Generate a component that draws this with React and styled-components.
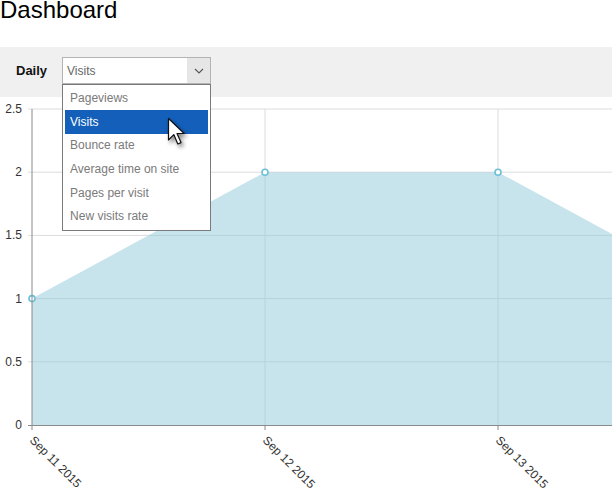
import React from "react";
import styled, { createGlobalStyle } from "styled-components";

const GlobalStyle = createGlobalStyle`
  html, body {
    margin: 0;
    padding: 0;
    background: #fff;
    overflow: hidden;
  }
  body {
    font-family: "Liberation Sans", Arial, sans-serif;
  }
`;

const Page = styled.div`
  width: 612px;
  height: 489px;
  overflow: hidden;
`;

const Header = styled.div`
  display: flow-root;
  height: 47px;
`;

const Title = styled.h1`
  margin: -4px 0 0 0;
  font-size: 24px;
  font-weight: normal;
  color: #000;
`;

const Toolbar = styled.div`
  display: flex;
  align-items: center;
  gap: 15px;
  box-sizing: border-box;
  height: 50px;
  padding: 0 0 3px 16px;
  background: #f0f0f0;
`;

const Label = styled.span`
  margin-top: -1px;
  font-size: 13px;
  font-weight: bold;
  color: #111;
`;

const SelectWrap = styled.div`
  position: relative;
  width: 149px;
`;

const SelectBox = styled.div`
  display: flex;
  align-items: stretch;
  box-sizing: border-box;
  height: 27px;
  border: 1px solid #b4b4b4;
  background: #fff;
`;

const SelectValue = styled.span`
  flex: 1;
  display: flex;
  align-items: center;
  padding-left: 4px;
  font-size: 12px;
  color: #666;
`;

const ArrowCell = styled.span`
  display: flex;
  align-items: center;
  justify-content: center;
  width: 23px;
  background: #e6e6e6;
`;

const Dropdown = styled.ul`
  position: absolute;
  top: 27px;
  left: 0;
  box-sizing: border-box;
  width: 149px;
  margin: 0;
  padding: 1.5px 2px 2px;
  list-style: none;
  background: #fff;
  border: 1px solid #7a7a7a;
  z-index: 2;
`;

const Option = styled.li`
  height: 23.6px;
  display: flex;
  align-items: center;
  padding-left: 5px;
  font-size: 12px;
  color: ${(props) => (props.active ? "#fff" : "#7a7a7a")};
  background: ${(props) => (props.active ? "#135fb9" : "transparent")};
`;

const Pointer = styled.svg`
  position: absolute;
  left: 104px;
  top: 32px;
  filter: drop-shadow(2px 3px 2px rgba(0, 0, 0, 0.45));
`;

const Chart = styled.svg`
  display: block;
`;

const options = [
  "Pageviews",
  "Visits",
  "Bounce rate",
  "Average time on site",
  "Pages per visit",
  "New visits rate",
];

const X0 = 32;
const STEP = 233;
const BASE = 328;
const UNIT = 126.4;
const yOf = (v) => BASE - v * UNIT;

const data = [1, 2, 2, 1];
const levels = [0.5, 1, 1.5, 2, 2.5];
const dates = ["Sep 11 2015", "Sep 12 2015", "Sep 13 2015"];

function AreaChart() {
  const pts = data.map((v, i) => [X0 + STEP * i, yOf(v)]);
  const area =
    pts.map((p) => p.join(",")).join(" ") +
    ` ${X0 + STEP * (data.length - 1)},${BASE} ${X0},${BASE}`;
  return (
    <Chart width="612" height="392" viewBox="0 0 612 392">
      {levels.map((v) => (
        <line key={v} x1="28" x2="612" y1={yOf(v)} y2={yOf(v)} stroke="#dcdcdc" />
      ))}
      {[1, 2].map((i) => (
        <line
          key={i}
          x1={X0 + STEP * i}
          x2={X0 + STEP * i}
          y1={yOf(2.5)}
          y2={BASE}
          stroke="#dcdcdc"
        />
      ))}
      <polygon points={area} fill="#8fcadc" fillOpacity="0.5" />
      {pts.slice(0, 3).map(([x, y]) => (
        <circle key={x} cx={x} cy={y} r="3" fill="#fff" stroke="#6dbfd6" strokeWidth="1.6" />
      ))}
      <line x1={X0} x2={X0} y1={yOf(2.5)} y2={BASE + 5} stroke="#8a8a8a" />
      <line x1="28" x2="612" y1={BASE + 0.5} y2={BASE + 0.5} stroke="#8a8a8a" />
      {[1, 2].map((i) => (
        <line
          key={i}
          x1={X0 + STEP * i}
          x2={X0 + STEP * i}
          y1={BASE}
          y2={BASE + 5}
          stroke="#8a8a8a"
        />
      ))}
      {[0, ...levels].map((v) => (
        <text
          key={v}
          x="22"
          y={yOf(v) + 4}
          textAnchor="end"
          fontSize="12"
          fill="#333"
          fontFamily="Liberation Sans, Arial, sans-serif"
        >
          {v}
        </text>
      ))}
      {dates.map((d, i) => {
        const x = X0 + STEP * i - 3;
        const y = BASE + 16;
        return (
          <text
            key={d}
            x={x}
            y={y}
            transform={`rotate(45 ${x} ${y})`}
            fontSize="12"
            fill="#333"
            fontFamily="Liberation Sans, Arial, sans-serif"
          >
            {d}
          </text>
        );
      })}
    </Chart>
  );
}

export default function App() {
  return (
    <Page>
      <GlobalStyle />
      <Header>
        <Title>Dashboard</Title>
      </Header>
      <Toolbar>
        <Label>Daily</Label>
        <SelectWrap>
          <SelectBox>
            <SelectValue>Visits</SelectValue>
            <ArrowCell>
              <svg width="10" height="6" viewBox="0 0 10 6">
                <polyline points="1,1 5,5 9,1" fill="none" stroke="#555" strokeWidth="1.1" />
              </svg>
            </ArrowCell>
          </SelectBox>
          <Dropdown>
            {options.map((o) => (
              <Option key={o} active={o === "Visits"}>
                {o}
              </Option>
            ))}
            <Pointer width="20" height="30" viewBox="0 0 20 30">
              <path
                d="M1.5 1.5 L1.5 23 L6.8 17.6 L10.8 27 L14 25.6 L10 16.5 L17.2 16.5 Z"
                fill="#fff"
                stroke="#111"
                strokeWidth="1.2"
                strokeLinejoin="round"
              />
            </Pointer>
          </Dropdown>
        </SelectWrap>
      </Toolbar>
      <AreaChart />
    </Page>
  );
}
